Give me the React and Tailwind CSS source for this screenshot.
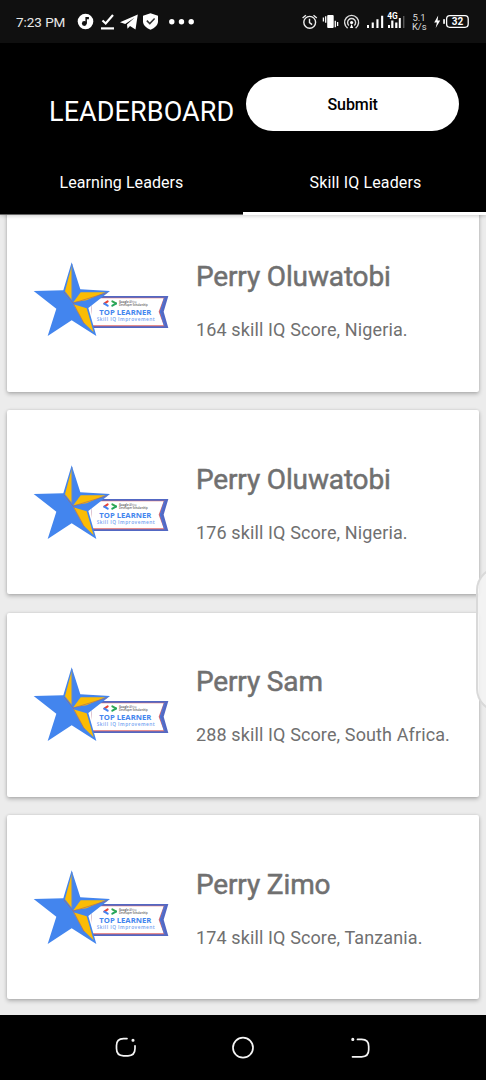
import React from "react";

const leaders = [
  { name: "Perry Oluwatobi", detail: "164 skill IQ Score, Nigeria." },
  { name: "Perry Oluwatobi", detail: "176 skill IQ Score, Nigeria." },
  { name: "Perry Sam", detail: "288 skill IQ Score, South Africa." },
  { name: "Perry Zimo", detail: "174 skill IQ Score, Tanzania." },
];

function StatusLeft() {
  return (
    <svg className="ml-[11px] h-[44px] w-[120px] shrink-0" viewBox="77 0 120 44" fill="#fff">
      <circle cx="85.5" cy="21.5" r="7.8" />
      <g fill="#111">
        <circle cx="84.3" cy="23.5" r="2.4" />
        <path d="M85.4 17h3.5v2.3h-2v4.2h-1.5z" />
      </g>
      <path d="M102.5 20.5l3.2 3L113 15" fill="none" stroke="#fff" strokeWidth="2.2" />
      <path d="M101 27.3h13v2.2h-13z" />
      <path d="M120 22.2L137.8 14.5 135.5 29.5 130 26 127.5 28.8 127 24.6 134.5 17.8 125.2 23.9z" />
      <path d="M150.5 13.2l7.5 2.6v5.5c0 3.8-3.2 6.8-7.5 8.5-4.3-1.7-7.5-4.7-7.5-8.5v-5.5z" />
      <path d="M146.8 20.6l3 3 4.8-5" fill="none" stroke="#333" strokeWidth="1.5" />
      <circle cx="171.8" cy="21.8" r="2.7" />
      <circle cx="181.5" cy="21.8" r="2.7" />
      <circle cx="191.2" cy="21.8" r="2.7" />
    </svg>
  );
}

function StatusRight() {
  return (
    <svg className="h-[44px] w-[186px] shrink-0" viewBox="300 0 186 44" fill="#fff" fontFamily="Roboto, sans-serif">
      <g fill="none" stroke="#eee" strokeWidth="1.4">
        <circle cx="309.7" cy="22.3" r="5.9" />
        <path d="M309.5 18.8v3.8l2.6 2M302.6 18l3.3-2.8M316.8 18l-3.3-2.8" />
      </g>
      <rect x="327.2" y="15" width="6.5" height="13" rx="1" />
      <path d="M323.4 17.5v4M325.7 16.3v6.4M335.3 20.8v6.4M337.6 22v4" stroke="#fff" strokeWidth="1.3" />
      <g fill="none" stroke="#ddd" strokeWidth="1.4">
        <path d="M347.6 28.1a7 7 0 1 1 8 0" />
        <path d="M348.9 25.5a4 4 0 1 1 5.4 0" />
      </g>
      <circle cx="351.6" cy="22.5" r="1.6" />
      <path d="M350 28l1.6-4 1.6 4z" />
      <path d="M367 25h2v3h-2zM371.7 22.5h2.1V28h-2.1zM376.4 19.3h2.1V28h-2.1zM381.1 15.7h2.1V28h-2.1z" />
      <path d="M388 25h2v3h-2zM391.2 20.5h2.2V28h-2.2zM395.2 22.5h2.2V28h-2.2zM398.8 18h2V28h-2z" />
      <path d="M403.3 16h1v12h-1z" fill="#777" />
      <text x="387.3" y="18.5" fontSize="8.5" fontWeight="700" textLength="10.5" lengthAdjust="spacingAndGlyphs">4G</text>
      <text x="419" y="20.5" fontSize="9.5" fill="#ddd" textAnchor="middle">5.1</text>
      <text x="419.3" y="30" fontSize="9.5" fill="#ddd" textAnchor="middle">K/s</text>
      <path d="M438.2 15.5l-4 7h2.7l-1.2 5.5 4.5-7.5h-2.6z" />
      <rect x="443.2" y="19" width="1.7" height="5" rx=".8" />
      <rect x="446.6" y="15.7" width="21.6" height="11.6" rx="3.2" fill="none" stroke="#fff" strokeWidth="1.3" />
      <text x="457.5" y="25" fontSize="10" fontWeight="700" textAnchor="middle">32</text>
    </svg>
  );
}

function Badge() {
  return (
    <svg className="h-[100px] w-[160px] shrink-0" viewBox="0 0 480 300" fontFamily="'Open Sans', sans-serif">
      <path d="M218 138H445L431 185 445 234H210z" fill="#5268c4" />
      <path d="M218 143H436L422 185 436 229H210z" fill="#df6a68" />
      <path d="M218 145H431L416 185 431 226H210z" fill="#fff" />
      <path d="M434 144L421 185 434 228" fill="none" stroke="#4974d8" strokeWidth="4" />
      <path d="M155 37L181 118 270 123 205 174 229 258 155 211 83 258 109 176 41 123 130 121z" fill="#4385ee" />
      <path d="M155 48V149L135 124z" fill="#fbbc05" />
      <path d="M160 157L182 127 256 127 199 151z" fill="#fbbc05" />
      <path d="M160 163L200 175 221 247 190 217z" fill="#fbbc05" />
      <path d="M132 126L160 160 193 222M160 159L262 128" fill="none" stroke="#a96967" strokeWidth="2" />
      <path d="M156 42V151" fill="none" stroke="#6e8cc4" strokeWidth="2" />
      <g fill="none" strokeWidth="6" strokeLinecap="round">
        <path d="M263 154L253 161" stroke="#ea4335" />
        <path d="M253 161L263 167" stroke="#4285f4" />
        <path d="M277 154L288 160" stroke="#34a853" />
        <path d="M288 161L277 167" stroke="#25a65b" />
      </g>
      <text x="297" y="158" fontSize="9" fill="#666" textLength="53" lengthAdjust="spacingAndGlyphs"><tspan fontWeight="700">Google</tspan> Africa</text>
      <text x="297" y="168" fontSize="9" fill="#555" fontWeight="600" textLength="86" lengthAdjust="spacingAndGlyphs">Developer Scholarship</text>
      <text x="238" y="195" fontSize="21" fontWeight="700" fill="#4385ee" textLength="156" lengthAdjust="spacingAndGlyphs">TOP LEARNER</text>
      <text x="230" y="212" fontSize="14.5" fontWeight="600" fill="#73a4f1" textLength="174" lengthAdjust="spacing">Skill IQ Improvement</text>
    </svg>
  );
}

function LeaderCard({ name, detail }) {
  return (
    <article className="flex h-[184px] shrink-0 rounded-[2px] bg-white pl-[13px] pt-[42.5px] shadow-[0_2px_4px_rgba(0,0,0,0.25),0_0_3px_rgba(0,0,0,0.1)]">
      <Badge />
      <div className="flex flex-col whitespace-nowrap pl-4 pt-[11px] text-[#707070]">
        <h2 className="text-[28px] font-normal leading-8 tracking-[-0.15px] [-webkit-text-stroke:0.5px_#707070]">{name}</h2>
        <p className="mt-[25px] text-[18px] leading-6 tracking-[0.12px]">{detail}</p>
      </div>
    </article>
  );
}

export default function App() {
  return (
    <div className="relative flex h-[1080px] w-[486px] flex-col overflow-hidden bg-[#ececec] font-[Roboto,sans-serif]">
      <div className="flex h-[43px] shrink-0 items-start bg-[#101010] pl-4 text-white">
        <span className="w-[50px] whitespace-nowrap text-[13.5px] leading-[44px] tracking-[-0.05px] text-[#e8e8e8]">7:23 PM</span>
        <StatusLeft />
        <div className="flex-1" />
        <StatusRight />
      </div>
      <header className="z-10 flex h-[172px] shrink-0 flex-col bg-black text-white shadow-[0_1px_4px_rgba(0,0,0,0.2)]">
        <div className="flex h-[108px] pl-[49px] pt-[34px]">
          <h1 className="w-[197.2px] whitespace-nowrap pt-[19px] text-[27px] leading-8 tracking-[0.1px]">LEADERBOARD</h1>
          <button className="h-[54px] w-[213px] rounded-full bg-white pt-[2px] text-[16px] font-medium tracking-[-0.1px] text-black">Submit</button>
        </div>
        <nav className="grid flex-1 grid-cols-2 text-center text-[16px] leading-6">
          <div className="border-b border-[#666] pt-5 tracking-[0.07px]">Learning Leaders</div>
          <div className="border-b-[3px] border-white pl-[2px] pt-5 tracking-[0.15px]">Skill IQ Leaders</div>
        </nav>
      </header>
      <main className="flex h-[800px] shrink-0 flex-col overflow-hidden px-[7px]">
        <div className="-mt-[7.5px] flex flex-col gap-[18.6px]">
          {leaders.map((leader, i) => <LeaderCard key={i} {...leader} />)}
        </div>
      </main>
      <footer className="flex h-[65px] shrink-0 items-center bg-black pl-[90px]">
        <svg className="h-[65px] w-[300px]" viewBox="90 1015 300 65" fill="none" stroke="#f5f5f5" strokeWidth="1.7" strokeLinecap="round">
          <path d="M127 1038.6h-3.5q-7 0-7 7v3q0 7.2 7 7.2h4.5q7 0 7-7.2v-2.8" />
          <circle cx="133" cy="1040.3" r=".7" />
          <circle cx="243" cy="1047.7" r="10" />
          <path d="M357.5 1039.4h4.2q7 0 7 7v3.4q0 7-7 7h-9.2" />
          <circle cx="352.8" cy="1039.4" r=".7" />
        </svg>
      </footer>
      <div className="absolute left-[476px] top-[567px] h-[145px] w-[46px] rounded-[23px] border-2 border-[#d2d2d2]/80 bg-[#f5f5f5]/85" />
    </div>
  );
}
